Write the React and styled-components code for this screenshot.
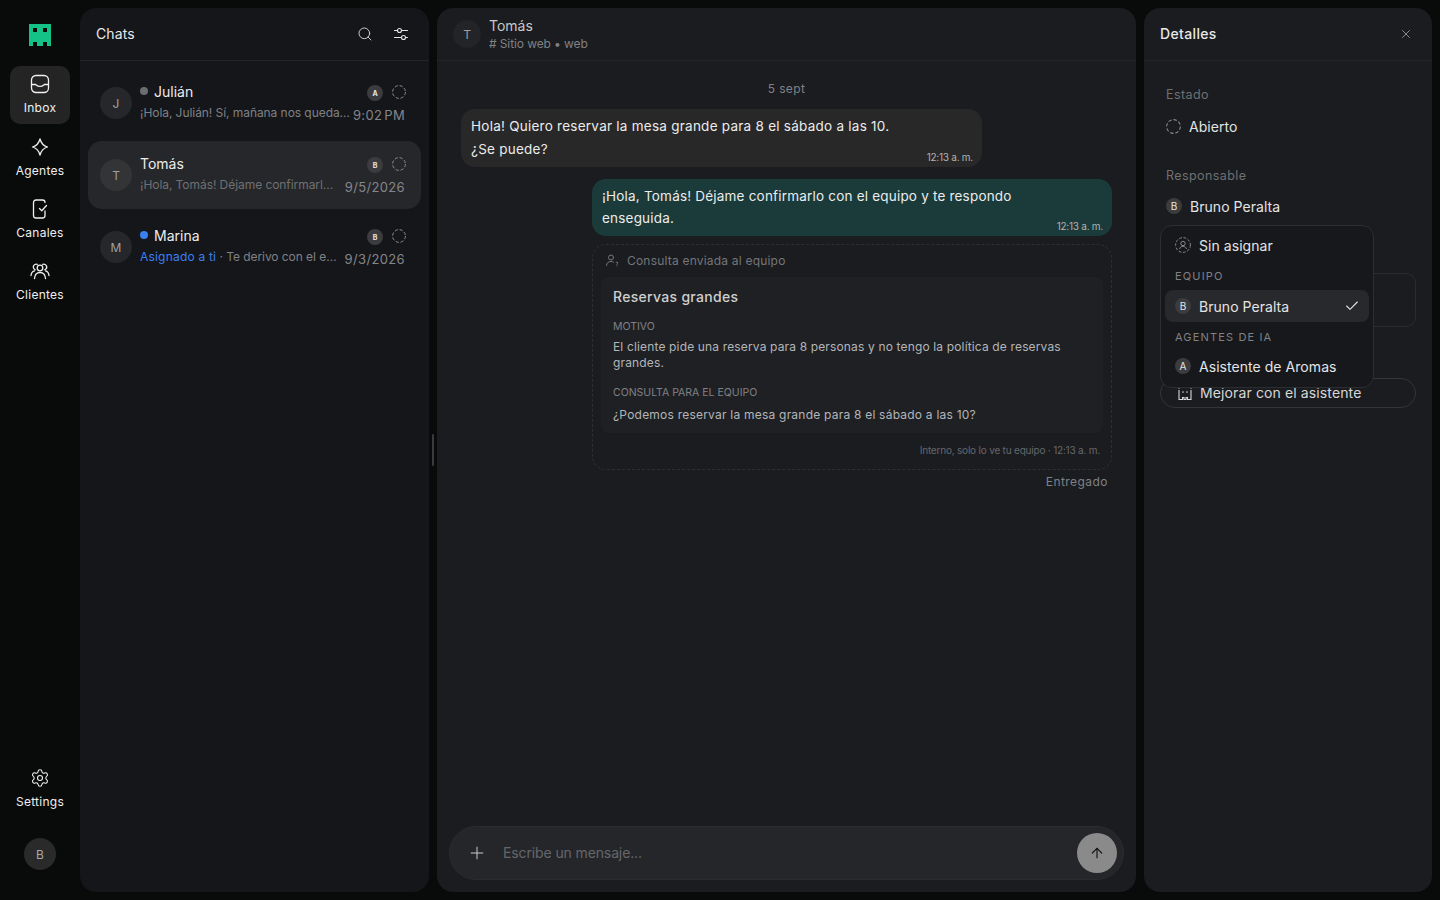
import React from 'react';
import styled, { createGlobalStyle } from 'styled-components';
import { Search, Settings, X, Plus, ArrowUp, Check } from 'lucide-react';

const GlobalStyle = createGlobalStyle`
  * { box-sizing: border-box; }
  html, body { margin: 0; height: 100%; background: #090a0a; overflow: hidden; }
  body { font-family: Inter, "Noto Sans", sans-serif; color: #e8e8e8; }
`;

const Shell = styled.div`
  display: grid;
  grid-template-columns: 80px 349px 8px 699px 296px;
  height: 900px;
  padding: 8px 0;
`;

const Nav = styled.nav`
  display: flex;
  flex-direction: column;
  align-items: center;
  margin-top: -8px;
  margin-bottom: -8px;
  padding-top: 24px;
`;

const Logo = styled.svg`
  width: 22px;
  height: 22px;
  margin-bottom: 20px;
`;

const NavItem = styled.div`
  width: 60px;
  height: ${(p) => (p.$active ? '58px' : '62px')};
  margin-bottom: ${(p) => (p.$active ? '4px' : '0')};
  padding-top: ${(p) => (p.$active ? '8px' : '9px')};
  display: flex;
  flex-direction: column;
  align-items: center;
  gap: 6px;
  border-radius: 10px;
  background: ${(p) => (p.$active ? '#242424' : 'transparent')};
  color: #f0f0f0;
  font-size: 12px;
  line-height: 16px;
  letter-spacing: 0.25px;
  svg { width: 20px; height: 20px; }
`;

const NavSpacer = styled.div`
  flex: 1;
`;

const UserAvatar = styled.div`
  width: 32px;
  height: 32px;
  margin: 17px 0 30px;
  border-radius: 50%;
  background: #2a2a2a;
  color: #a8a8a8;
  font-size: 12px;
  display: flex;
  align-items: center;
  justify-content: center;
`;

const Panel = styled.section`
  display: flex;
  flex-direction: column;
  border-radius: 16px;
  overflow: hidden;
  background: ${(p) => p.$bg};
  position: relative;
`;

const DetailsPanel = styled(Panel)`
  margin-left: 8px;
  width: 288px;
`;

const PanelHeader = styled.header`
  height: 53px;
  flex: none;
  display: flex;
  align-items: center;
  justify-content: space-between;
  padding: 0 16px;
  border-bottom: 1px solid #24262a;
`;

const PanelTitle = styled.h2`
  margin: 0 0 1px;
  font-size: 14px;
  font-weight: ${(p) => (p.$bold ? 500 : 400)};
  letter-spacing: ${(p) => (p.$bold ? '0.35px' : '0.1px')};
  color: #e8e8e8;
`;

const HeaderIcons = styled.div`
  display: flex;
  align-items: center;
  gap: 20px;
  margin-right: ${(p) => p.$right}px;
  color: ${(p) => p.$color || '#e4e4e4'};
  svg { width: ${(p) => p.$icon || 16}px; height: ${(p) => p.$icon || 16}px; display: block; }
`;

const ChatList = styled.div`
  display: flex;
  flex-direction: column;
  gap: 4px;
  padding: 8px;
`;

const ChatRow = styled.div`
  height: 68px;
  display: flex;
  align-items: center;
  gap: 8px;
  padding: 0 16px 0 12px;
  border-radius: 14px;
  background: ${(p) => (p.$selected ? '#26272a' : 'transparent')};
`;

const Avatar = styled.div`
  width: ${(p) => p.$size || 32}px;
  height: ${(p) => p.$size || 32}px;
  flex: none;
  border-radius: 50%;
  background: ${(p) => p.$bg || '#25272b'};
  color: #a0a0a0;
  font-size: 12px;
  display: flex;
  align-items: center;
  justify-content: center;
`;

const ChatBody = styled.div`
  flex: 1;
  min-width: 0;
  display: flex;
  flex-direction: column;
  padding-bottom: 2px;
`;

const ChatTop = styled.div`
  display: flex;
  align-items: center;
  height: 24px;
`;

const ChatName = styled.span`
  flex: 1;
  display: flex;
  align-items: center;
  gap: 6px;
  margin-top: -4px;
  font-size: 14px;
  color: #ececec;
`;

const Dot = styled.span`
  width: 8px;
  height: 8px;
  border-radius: 50%;
  background: ${(p) => p.$color};
`;

const Badge = styled.span`
  width: 16px;
  height: 16px;
  flex: none;
  border-radius: 50%;
  background: #3c3c3e;
  color: #e6e6e6;
  font-size: ${(p) => p.$font || 7}px;
  font-weight: ${(p) => (p.$font ? 400 : 700)};
  display: flex;
  align-items: center;
  justify-content: center;
  margin-right: ${(p) => p.$gap || 0}px;
`;

const ChatBottom = styled.div`
  display: flex;
  align-items: center;
  gap: 4px;
  height: 18px;
`;

const Preview = styled.span`
  flex: 1;
  min-width: 0;
  margin-bottom: 2px;
  font-size: 12px;
  line-height: 16px;
  letter-spacing: -0.06px;
  white-space: nowrap;
  color: ${(p) => (p.$dim ? '#6f7073' : '#808184')};
`;

const Assigned = styled.span`
  color: #3b7ff0;
  letter-spacing: 0.2px;
`;

const Time = styled.span`
  flex: none;
  font-size: 13px;
  line-height: 16px;
  letter-spacing: 0.35px;
  word-spacing: -2px;
  color: #85868a;
  margin-top: 2px;
`;

const ResizeGap = styled.div`
  display: flex;
  align-items: center;
  justify-content: center;
`;

const ResizeHandle = styled.div`
  width: 2px;
  height: 32px;
  background: #3a3b3d;
  border-radius: 1px;
`;

const ConvHeaderInfo = styled.div`
  display: flex;
  align-items: center;
  gap: 8px;
`;

const ConvName = styled.div`
  font-size: 14px;
  line-height: 18px;
  color: #c8c8c8;
`;

const ConvSub = styled.div`
  margin-top: 1px;
  font-size: 12px;
  line-height: 16px;
  letter-spacing: -0.1px;
  color: #808184;
`;

const Messages = styled.div`
  flex: 1;
  display: flex;
  flex-direction: column;
  padding: 18px 24px 0;
  min-height: 0;
`;

const DateLabel = styled.div`
  text-align: center;
  font-size: 12px;
  line-height: 20px;
  letter-spacing: 0.35px;
  color: #808184;
  margin-bottom: 10px;
`;

const Bubble = styled.div`
  width: ${(p) => p.$width}px;
  height: ${(p) => p.$height}px;
  position: relative;
  align-self: ${(p) => (p.$out ? 'flex-end' : 'flex-start')};
  background: ${(p) => (p.$out ? '#1b3a3a' : '#282828')};
  border-radius: 14px;
  padding: ${(p) => (p.$out ? '6px 90px 6px 10px' : '6px 10px')};
  font-size: 13.5px;
  line-height: ${(p) => (p.$out ? '22px' : '23px')};
  letter-spacing: ${(p) => (p.$out ? '0.2px' : '0.25px')};
  color: #ececec;
  margin-bottom: ${(p) => p.$mb}px;
`;

const BubbleTime = styled.span`
  position: absolute;
  right: 9px;
  bottom: 3px;
  font-size: 10px;
  line-height: 14px;
  letter-spacing: -0.25px;
  color: #b0b4b4;
`;

const InternalCard = styled.div`
  width: 520px;
  height: 226px;
  align-self: flex-end;
  border: 1px dashed #2d2f33;
  border-radius: 14px;
  padding: 7px 8px 0;
`;

const InternalHead = styled.div`
  display: flex;
  align-items: center;
  gap: 8px;
  padding-left: 4px;
  height: 16px;
  font-size: 12px;
  letter-spacing: 0.2px;
  color: #75767a;
  svg { width: 14px; height: 14px; }
`;

const InternalBody = styled.div`
  margin-top: 9px;
  height: 156px;
  border-radius: 8px;
  background: #1e2024;
  padding: 10px 12px;
`;

const InternalTitle = styled.div`
  font-size: 14px;
  line-height: 20px;
  font-weight: 500;
  letter-spacing: 0.3px;
  color: #cfcfcf;
`;

const FieldLabel = styled.div`
  margin-top: ${(p) => p.$mt}px;
  font-size: 10.5px;
  line-height: 14px;
  color: #808184;
`;

const FieldText = styled.div`
  margin-top: ${(p) => p.$mt}px;
  font-size: 12px;
  line-height: 16px;
  letter-spacing: ${(p) => p.$ls}px;
  color: #b4b5b8;
`;

const InternalFoot = styled.div`
  margin-top: 10px;
  text-align: right;
  padding-right: 3px;
  font-size: 10px;
  line-height: 14px;
  letter-spacing: -0.2px;
  color: #66676b;
`;

const Delivered = styled.div`
  align-self: flex-end;
  margin: 4px 4px 0 0;
  font-size: 12px;
  line-height: 16px;
  letter-spacing: 0.45px;
  color: #808184;
`;

const Composer = styled.div`
  flex: none;
  height: 54px;
  margin: 0 12px 12px;
  display: flex;
  align-items: center;
  padding: 0 6px 0 17px;
  border-radius: 27px;
  background: #24262a;
  border: 1px solid #2a2c30;
  color: #c8c8c8;
`;

const Placeholder = styled.div`
  flex: 1;
  margin-left: 16px;
  margin-bottom: 1px;
  font-size: 14px;
  letter-spacing: -0.12px;
  color: #66676b;
`;

const SendButton = styled.div`
  width: 40px;
  height: 40px;
  border-radius: 50%;
  background: #8a8a8a;
  color: #17181b;
  display: flex;
  align-items: center;
  justify-content: center;
`;

const DetailBody = styled.div`
  position: relative;
  flex: 1;
  padding: 25px 16px 0;
`;

const DetailLabel = styled.div`
  padding-left: 6px;
  font-size: 12.5px;
  line-height: 18px;
  letter-spacing: 0.42px;
  color: #6f7073;
  margin-bottom: ${(p) => p.$mb}px;
`;

const DetailValue = styled.div`
  display: flex;
  align-items: center;
  gap: 8px;
  padding-left: 6px;
  height: 24px;
  font-size: 14px;
  letter-spacing: 0.05px;
  color: #e4e4e4;
  margin-bottom: ${(p) => p.$mb}px;
`;

const NotesBox = styled.div`
  height: 54px;
  border: 1px solid #2a2c30;
  border-radius: 10px;
  margin-bottom: 51px;
`;

const ImproveButton = styled.div`
  height: 30px;
  display: flex;
  align-items: center;
  gap: 7px;
  padding: 0 0 1px 16px;
  border: 1px solid #33353a;
  border-radius: 15px;
  font-size: 14px;
  letter-spacing: 0.12px;
  color: #d8d8d8;
`;

const Menu = styled.div`
  position: absolute;
  top: 164px;
  left: 16px;
  width: 214px;
  height: 163px;
  padding: 4px;
  background: #17181b;
  border: 1px solid #2c2e32;
  border-radius: 12px;
  z-index: 2;
`;

const MenuItem = styled.div`
  height: ${(p) => (p.$sel ? 32 : 30)}px;
  display: flex;
  align-items: center;
  gap: 8px;
  padding: 0 10px;
  border-radius: 8px;
  background: ${(p) => (p.$sel ? '#28292c' : 'transparent')};
  font-size: 14px;
  letter-spacing: 0.05px;
  color: #e4e4e4;
`;

const MenuLabel = styled.div`
  height: ${(p) => p.$h}px;
  padding: ${(p) => p.$pad || 0}px 10px 0;
  display: flex;
  align-items: center;
  font-size: 11px;
  letter-spacing: 1.15px;
  color: #808184;
`;

const CheckMark = styled.span`
  margin-left: auto;
  display: flex;
  margin-right: -1px;
`;

const DashedSvg = styled.svg`
  flex: none;
  margin: ${(p) => (p.$nudge ? '-2px -1px 0 0' : '0')};
`;

const DashedCircle = ({ size = 14, nudge }) => (
  <DashedSvg width={size} height={size} viewBox="0 0 14 14" fill="none" $nudge={nudge}>
    <circle cx="7" cy="7" r="6.4" stroke="#8a8b8e" strokeWidth="1" strokeDasharray="3.2 1.8" />
  </DashedSvg>
);

const InboxIcon = () => (
  <svg viewBox="0 0 20 20" fill="none" stroke="currentColor" strokeWidth="1.3">
    <rect x="1.500" y="1.500" width="17" height="17" rx="4.5" />
    <path d="M1.500 10.500h4c.8 0 1 1.800 4.500 1.800s3.700-1.800 4.500-1.800h4" />
  </svg>
);

const AgentIcon = () => (
  <svg viewBox="0 0 20 20" fill="none" stroke="currentColor" strokeWidth="1.3" strokeLinejoin="round">
    <path d="M10 2c1 4 3.200 6.700 7.500 8-4.300 1.300-6.500 4-7.500 8-1-4-3.200-6.700-7.500-8C6.800 8.700 9 6 10 2z" />
  </svg>
);

const ChannelIcon = () => (
  <svg viewBox="0 0 20 20" fill="none" stroke="currentColor" strokeWidth="1.3" strokeLinecap="round" strokeLinejoin="round">
    <path d="M15 3.500A2.500 2.500 0 0 0 12.500 1h-6.500A2.500 2.500 0 0 0 3.500 3.500v13A2.500 2.500 0 0 0 6 19h6.500a2.500 2.500 0 0 0 2.500-2.500V12" />
    <path d="M9.500 9.500l2.300 2.300L16.500 6.500" />
  </svg>
);

const ClientsIcon = () => (
  <svg viewBox="0 0 20 20" fill="none" stroke="currentColor" strokeWidth="1.3" strokeLinecap="round">
    <circle cx="10" cy="7" r="2.800" />
    <path d="M4.500 17.500c.3-3.800 2.500-6 5.500-6s5.200 2.200 5.500 6" />
    <path d="M7.200 3.400a2.800 2.800 0 1 0-2 5.400M12.800 3.400a2.800 2.800 0 1 1 2 5.400" />
    <path d="M1 14.500c.3-2.600 1.600-4.200 3.500-4.600M19 14.500c-.3-2.600-1.600-4.200-3.500-4.600" />
  </svg>
);

const SlidersIcon = () => (
  <svg viewBox="0 0 16 16" fill="none" stroke="currentColor" strokeWidth="1.1" strokeLinecap="round">
    <path d="M1.500 4.500h3M8.500 4.500h6M1.500 11.500h7M12.500 11.500h2" />
    <circle cx="6.500" cy="4.500" r="2" />
    <circle cx="10.500" cy="11.500" r="2" />
  </svg>
);

const GhostIcon = () => (
  <svg width="16" height="16" viewBox="0 0 16 16" fill="none" stroke="currentColor" strokeWidth="1.1">
    <path d="M2 5v9.500h3.500v-2h1.500v2h2v-2h1.500v2H14V5" />
    <path d="M2 2.500v.8M14 2.500v.8M5 2h1M10 2h1M5.500 7h1M9.500 7h1" strokeLinecap="round" />
  </svg>
);

const UnassignedIcon = () => (
  <svg width="16" height="16" viewBox="0 0 16 16" fill="none" stroke="#85868a" strokeWidth="1">
    <circle cx="8" cy="8" r="7.400" strokeDasharray="2.800 1.600" />
    <circle cx="8" cy="6.500" r="2.200" />
    <path d="M4.500 12c.5-1.800 1.800-2.700 3.500-2.700s3 .9 3.500 2.700" />
  </svg>
);

const TeamIcon = () => (
  <svg viewBox="0 0 14 14" fill="none" stroke="currentColor" strokeWidth="1" strokeLinecap="round">
    <circle cx="6" cy="4.500" r="2.500" />
    <path d="M1.500 12.500c.3-2.800 2-4 4.500-4 1 0 1.800.2 2.500.6" />
    <path d="M11 9.500c0-.7 1.800-.7 1.800.4 0 .8-.9.800-.9 1.500M11.900 12.800v.1" />
  </svg>
);

const chats = [
  { id: 'j', initial: 'J', name: 'Julián', dot: '#6b6c70', badge: 'A', time: '9:02 PM', preview: '¡Hola, Julián! Sí, mañana nos queda…' },
  { id: 't', initial: 'T', name: 'Tomás', badge: 'B', time: '9/5/2026', preview: '¡Hola, Tomás! Déjame confirmarl…', selected: true },
  { id: 'm', initial: 'M', name: 'Marina', dot: '#3b7ff0', badge: 'B', time: '9/3/2026', assigned: true, preview: 'Te derivo con el e…' },
];

const App = () => {
  return (
    <>
      <GlobalStyle />
      <Shell>
        <Nav>
          <Logo viewBox="0 0 22 22">
            <path fill="#14c287" d="M0 0h22v22h-4v-4h-4v4H8v-4H4v4H0z" />
            <rect x="4" y="4" width="4" height="4" fill="#090a0a" />
            <rect x="14" y="4" width="4" height="4" fill="#090a0a" />
          </Logo>
          <NavItem $active><InboxIcon />Inbox</NavItem>
          <NavItem><AgentIcon />Agentes</NavItem>
          <NavItem><ChannelIcon />Canales</NavItem>
          <NavItem><ClientsIcon />Clientes</NavItem>
          <NavSpacer />
          <NavItem><Settings strokeWidth={1.3} />Settings</NavItem>
          <UserAvatar>B</UserAvatar>
        </Nav>

        <Panel $bg="#14161a">
          <PanelHeader>
            <PanelTitle>Chats</PanelTitle>
            <HeaderIcons $right={4}>
              <Search strokeWidth={1.3} />
              <SlidersIcon />
            </HeaderIcons>
          </PanelHeader>
          <ChatList>
            {chats.map((chat) => (
              <ChatRow key={chat.id} $selected={chat.selected}>
                <Avatar $bg={chat.selected ? '#333436' : undefined}>{chat.initial}</Avatar>
                <ChatBody>
                  <ChatTop>
                    <ChatName>
                      {chat.dot && <Dot $color={chat.dot} />}
                      {chat.name}
                    </ChatName>
                    <Badge $gap={9}>{chat.badge}</Badge>
                    <DashedCircle nudge />
                  </ChatTop>
                  <ChatBottom>
                    <Preview $dim={chat.selected}>
                      {chat.assigned && <><Assigned>Asignado a ti</Assigned> · </>}
                      {chat.preview}
                    </Preview>
                    <Time>{chat.time}</Time>
                  </ChatBottom>
                </ChatBody>
              </ChatRow>
            ))}
          </ChatList>
        </Panel>

        <ResizeGap><ResizeHandle /></ResizeGap>

        <Panel $bg="#1a1c20">
          <PanelHeader>
            <ConvHeaderInfo>
              <Avatar $size={28} $bg="#222427">T</Avatar>
              <div>
                <ConvName>Tomás</ConvName>
                <ConvSub># Sitio web • web</ConvSub>
              </div>
            </ConvHeaderInfo>
          </PanelHeader>
          <Messages>
            <DateLabel>5 sept</DateLabel>
            <Bubble $width={521} $height={58} $mb={12}>
              Hola! Quiero reservar la mesa grande para 8 el sábado a las 10.
              <br />
              ¿Se puede?
              <BubbleTime>12:13 a. m.</BubbleTime>
            </Bubble>
            <Bubble $out $width={520} $height={57} $mb={8}>
              ¡Hola, Tomás! Déjame confirmarlo con el equipo y te respondo enseguida.
              <BubbleTime>12:13 a. m.</BubbleTime>
            </Bubble>
            <InternalCard>
              <InternalHead>
                <TeamIcon />
                Consulta enviada al equipo
              </InternalHead>
              <InternalBody>
                <InternalTitle>Reservas grandes</InternalTitle>
                <FieldLabel $mt={13}>MOTIVO</FieldLabel>
                <FieldText $mt={5} $ls={0.15}>
                  El cliente pide una reserva para 8 personas y no tengo la política de reservas grandes.
                </FieldText>
                <FieldLabel $mt={15}>CONSULTA PARA EL EQUIPO</FieldLabel>
                <FieldText $mt={7} $ls={0.22}>¿Podemos reservar la mesa grande para 8 el sábado a las 10?</FieldText>
              </InternalBody>
              <InternalFoot>Interno, solo lo ve tu equipo · 12:13 a. m.</InternalFoot>
            </InternalCard>
            <Delivered>Entregado</Delivered>
          </Messages>
          <Composer>
            <Plus size={20} strokeWidth={1.2} />
            <Placeholder>Escribe un mensaje...</Placeholder>
            <SendButton><ArrowUp size={16} strokeWidth={1.8} /></SendButton>
          </Composer>
        </Panel>

        <DetailsPanel $bg="#1a1c20">
          <PanelHeader>
            <PanelTitle $bold>Detalles</PanelTitle>
            <HeaderIcons $right={3} $icon={14} $color="#b8b8b8">
              <X strokeWidth={1.2} />
            </HeaderIcons>
          </PanelHeader>
          <DetailBody>
            <DetailLabel $mb={10}>Estado</DetailLabel>
            <DetailValue $mb={29}><DashedCircle size={15} />Abierto</DetailValue>
            <DetailLabel $mb={9}>Responsable</DetailLabel>
            <DetailValue $mb={55}><Badge $font={10}>B</Badge>Bruno Peralta</DetailValue>
            <NotesBox />
            <ImproveButton><GhostIcon />Mejorar con el asistente</ImproveButton>
            <Menu>
              <MenuItem><UnassignedIcon />Sin asignar</MenuItem>
              <MenuLabel $h={30} $pad={2}>EQUIPO</MenuLabel>
              <MenuItem $sel>
                <Badge $font={10}>B</Badge>Bruno Peralta
                <CheckMark><Check size={16} strokeWidth={1.6} /></CheckMark>
              </MenuItem>
              <MenuLabel $h={29}>AGENTES DE IA</MenuLabel>
              <MenuItem><Badge $font={10}>A</Badge>Asistente de Aromas</MenuItem>
            </Menu>
          </DetailBody>
        </DetailsPanel>
      </Shell>
    </>
  );
};

export default App;
